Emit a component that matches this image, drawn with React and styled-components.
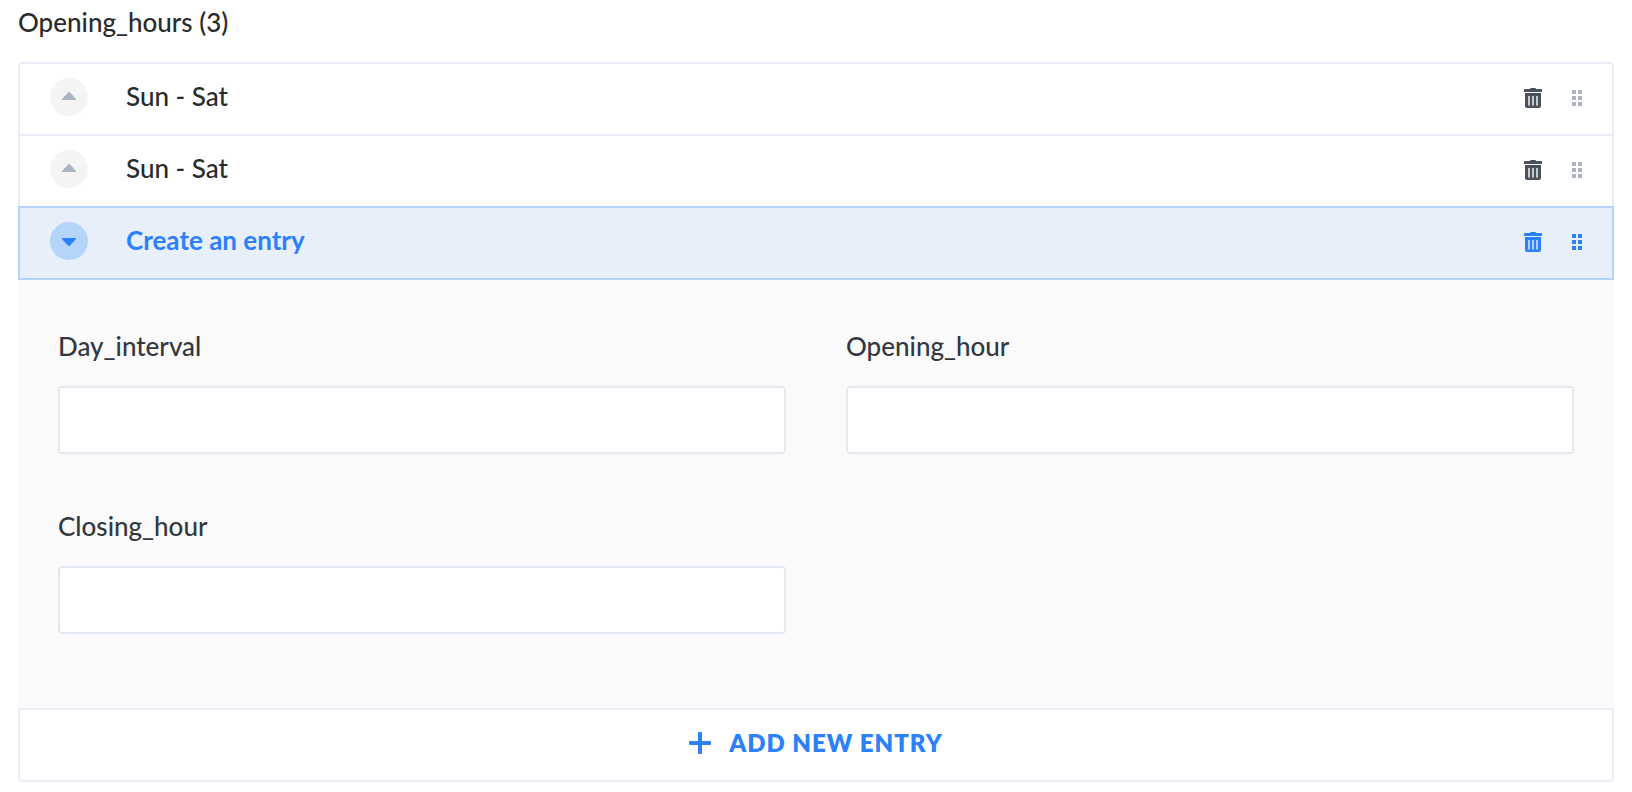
import React, { useState } from "react";
import styled, { createGlobalStyle, css } from "styled-components";

const GlobalStyle = createGlobalStyle`
  *, *::before, *::after { box-sizing: border-box; }
  body {
    margin: 0;
    background: #ffffff;
    color: #292b2c;
    font-family: Lato, sans-serif;
    font-size: 26px;
    line-height: 32px;
    -webkit-font-smoothing: antialiased;
  }
  button, input { font: inherit; }
`;

const Page = styled.main`
  padding: 6px 18px 10px;
`;

const Heading = styled.h1`
  margin: 0 0 24px;
  font-size: 26px;
  line-height: 32px;
  font-weight: 500;
`;

const Row = styled.div`
  display: flex;
  align-items: flex-start;
  padding: 14px 30px 16px;
  border: 2px solid #e9edf5;
  border-bottom-width: 0;
  background: #ffffff;
  color: #292b2c;

  &:first-of-type {
    border-radius: 4px 4px 0 0;
  }

  ${(p) =>
    p.$open &&
    css`
      border-color: #b3d4fa;
      border-bottom-width: 2px;
      background: #e7f0fa;
      color: #2d80fb;
    `}
`;

const Toggle = styled.button`
  display: flex;
  flex: 1;
  align-items: flex-start;
  gap: 38px;
  padding: 0;
  border: 0;
  background: none;
  color: inherit;
  text-align: left;
  cursor: pointer;
`;

const Caret = styled.span`
  display: flex;
  justify-content: center;
  width: 38px;
  height: 38px;
  padding-top: ${(p) => (p.$open ? 16 : 14)}px;
  border-radius: 50%;
  background: ${(p) => (p.$open ? "#b5d4f9" : "#f3f5f5")};
  color: ${(p) => (p.$open ? "#2d80fb" : "#aab3c2")};
`;

const RowTitle = styled.span`
  line-height: 36px;
  font-weight: ${(p) => (p.$open ? 700 : 500)};
`;

const Actions = styled.div`
  display: flex;
  align-items: center;
  gap: 30px;
  height: 40px;
`;

const IconButton = styled.button`
  display: flex;
  padding: 0;
  border: 0;
  background: none;
  color: ${(p) => p.$color};
  cursor: pointer;
`;

const Panel = styled.div`
  display: grid;
  grid-template-columns: repeat(2, minmax(0, 1fr));
  gap: 56px 60px;
  padding: 50px 40px 74px;
  background: #fafafb;
`;

const Field = styled.div`
  display: flex;
  flex-direction: column;
  gap: 24px;
`;

const Label = styled.label`
  color: #333740;
  font-weight: 500;
`;

const Input = styled.input`
  width: 100%;
  height: 68px;
  padding: 0 20px;
  border: 2px solid #e3e9f3;
  border-radius: 4px;
  background: #ffffff;
  color: #333740;
`;

const AddButton = styled.button`
  display: flex;
  align-items: center;
  justify-content: center;
  gap: 18px;
  width: 100%;
  padding: 17px 0 21px;
  border: 2px solid #e9edf5;
  border-radius: 0 0 4px 4px;
  background: #ffffff;
  color: #2d80fb;
  font-size: 24px;
  font-weight: 800;
  letter-spacing: 1px;
  text-transform: uppercase;
  cursor: pointer;
`;

const CaretIcon = ({ down }) => (
  <svg width="14" height="8" viewBox="0 0 14 8" fill="currentColor" aria-hidden="true">
    <path d={down ? "M0 0H14V1L8 7.6Q7 8.4 6 7.6L0 1Z" : "M0 8H14V7L8 .4Q7 -.4 6 .4L0 7Z"} />
  </svg>
);

const TrashIcon = () => (
  <svg width="18" height="20" viewBox="0 0 18 20" fill="currentColor" aria-hidden="true">
    <path d="M6 1Q6 0 7 0H11Q12 0 12 1H17Q18 1 18 2V4H0V2Q0 1 1 1Z" />
    <path
      fillRule="evenodd"
      d="M1 5H17V18Q17 20 15 20H3Q1 20 1 18ZM4 8V17.5H6V8ZM8 8V17.5H10V8ZM12 8V17.5H14V8Z"
    />
    <path opacity=".3" d="M4 8H6V17.5H4ZM8 8H10V17.5H8ZM12 8H14V17.5H12Z" />
  </svg>
);

const GripIcon = () => (
  <svg width="10" height="16" viewBox="0 0 10 16" fill="currentColor" aria-hidden="true">
    <path d="M0 0H4V4H0ZM6 0H10V4H6ZM0 6H4V10H0ZM6 6H10V10H6ZM0 12H4V16H0ZM6 12H10V16H6Z" />
  </svg>
);

const PlusIcon = () => (
  <svg width="22" height="22" viewBox="0 0 22 22" fill="currentColor" aria-hidden="true">
    <rect x="9" y="0" width="4" height="22" rx="1" />
    <rect x="0" y="9" width="22" height="4" rx="1" />
  </svg>
);

const fields = [
  { id: "day_interval", label: "Day_interval" },
  { id: "opening_hour", label: "Opening_hour" },
  { id: "closing_hour", label: "Closing_hour" },
];

function Entry({ title, open, onToggle, onRemove }) {
  return (
    <>
      <Row $open={open}>
        <Toggle type="button" aria-expanded={open} onClick={onToggle}>
          <Caret $open={open}>
            <CaretIcon down={open} />
          </Caret>
          <RowTitle $open={open}>{title}</RowTitle>
        </Toggle>
        <Actions>
          <IconButton
            type="button"
            aria-label="Delete entry"
            $color={open ? "#2d80fb" : "#4b515a"}
            onClick={onRemove}
          >
            <TrashIcon />
          </IconButton>
          <IconButton type="button" aria-label="Move entry" $color={open ? "#2d80fb" : "#aab3c2"}>
            <GripIcon />
          </IconButton>
        </Actions>
      </Row>
      {open && (
        <Panel>
          {fields.map((field) => (
            <Field key={field.id}>
              <Label htmlFor={field.id}>{field.label}</Label>
              <Input id={field.id} name={field.id} type="text" />
            </Field>
          ))}
        </Panel>
      )}
    </>
  );
}

export default function App() {
  const [entries, setEntries] = useState([
    { id: 1, title: "Sun - Sat" },
    { id: 2, title: "Sun - Sat" },
    { id: 3, title: "Create an entry" },
  ]);
  const [openId, setOpenId] = useState(3);

  const addEntry = () => {
    const id = Math.max(0, ...entries.map((entry) => entry.id)) + 1;
    setEntries([...entries, { id, title: "Create an entry" }]);
    setOpenId(id);
  };

  return (
    <>
      <GlobalStyle />
      <Page>
        <Heading>Opening_hours ({entries.length})</Heading>
        <section>
          {entries.map((entry) => (
            <Entry
              key={entry.id}
              title={entry.title}
              open={entry.id === openId}
              onToggle={() => setOpenId(entry.id === openId ? null : entry.id)}
              onRemove={() => setEntries(entries.filter((e) => e.id !== entry.id))}
            />
          ))}
          <AddButton type="button" onClick={addEntry}>
            <PlusIcon />
            Add new entry
          </AddButton>
        </section>
      </Page>
    </>
  );
}
